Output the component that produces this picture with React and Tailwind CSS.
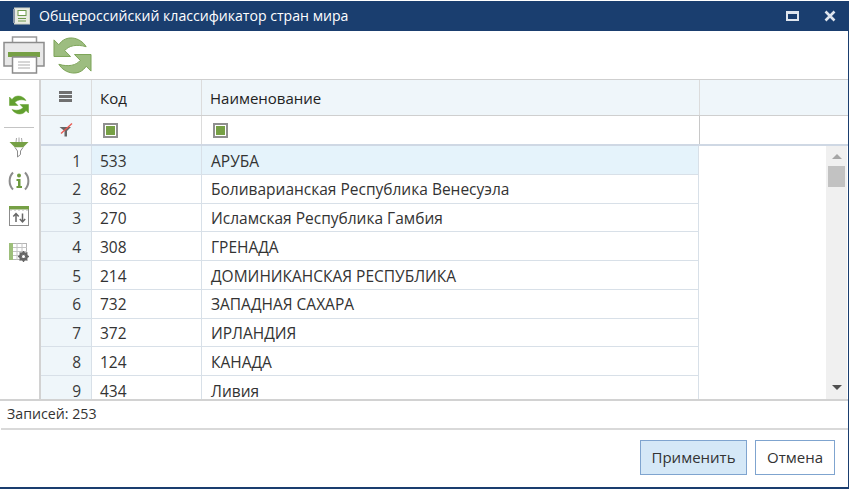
// Country classifier dialog
import React from 'react';

const ROWS = [
  [1, '533', 'АРУБА'],
  [2, '862', 'Боливарианская Республика Венесуэла'],
  [3, '270', 'Исламская Республика Гамбия'],
  [4, '308', 'ГРЕНАДА'],
  [5, '214', 'ДОМИНИКАНСКАЯ РЕСПУБЛИКА'],
  [6, '732', 'ЗАПАДНАЯ САХАРА'],
  [7, '372', 'ИРЛАНДИЯ'],
  [8, '124', 'КАНАДА'],
  [9, '434', 'Ливия'],
];

function RefreshIcon({ size, fill = '#9dbd80', stroke = '#7aa255' }) {
  return (
    <svg width={size} height={size} viewBox="0 0 40 40">
      <path
        d="M1 4 L1 21 L18 21 L12 15 C16 10 24 8 34 11 C28 1 13 -2 6 9 Z"
        fill={fill}
        stroke={stroke}
        strokeWidth="1"
      />
      <path
        d="M39 36 L39 19 L22 19 L28 25 C24 30 16 32 6 29 C12 39 27 42 34 31 Z"
        fill={fill}
        stroke={stroke}
        strokeWidth="1"
      />
    </svg>
  );
}

function PrintIcon() {
  return (
    <svg width="42" height="38" viewBox="0 0 42 38">
      <path d="M9.5 1 H33.5 V9 H9.5 Z" fill="#fff" stroke="#9a9a9a" strokeWidth="1.5" />
      <path d="M1 6.5 H41 V30 H1 Z" fill="#e8e8e8" stroke="#8c8c8c" strokeWidth="1.5" />
      <rect x="5" y="16" width="32" height="5" fill="#76a045" />
      <path d="M9.5 21 H33.5 V37 H9.5 Z" fill="#fff" stroke="#8c8c8c" strokeWidth="1.5" />
      <path d="M15 26 H27 M15 29 H27 M15 32 H27" stroke="#c9c9c9" strokeWidth="1.3" />
    </svg>
  );
}

function FilterOffIcon() {
  return (
    <svg width="14" height="14" viewBox="0 0 14 14">
      <path d="M0.5 4 H12 L8 8 V13.5 H5.5 V8 Z" fill="#666" />
      <path d="M2 10.5 L13 0.5" stroke="#e8584f" strokeWidth="1.3" />
    </svg>
  );
}

function FunnelIcon() {
  return (
    <svg width="20" height="21" viewBox="0 0 20 21">
      <path d="M7 5 L7.5 1 M10 5 V0.5 M13 5 L12.5 1" stroke="#a8a8a8" strokeWidth="1" />
      <path d="M0.5 5 H19.5 L14 10.5 H6 Z" fill="#76a045" />
      <path d="M6 10.5 L8.5 14 V20 L11.5 17.5 V14 L14 10.5" fill="#fff" stroke="#8c8c8c" strokeWidth="1" />
    </svg>
  );
}

function InfoIcon() {
  return (
    <svg width="22" height="20" viewBox="0 0 22 20">
      <path d="M5 1.5 C0.5 6 0.5 14 5 18.5" fill="none" stroke="#8c8c8c" strokeWidth="2" />
      <path d="M17 1.5 C21.5 6 21.5 14 17 18.5" fill="none" stroke="#8c8c8c" strokeWidth="2" />
      <circle cx="11" cy="4.5" r="2" fill="#6d9a3f" />
      <path d="M8.5 8 H12.5 V15 H14 V17 H8.5 V15 H10 V10 H8.5 Z" fill="#6d9a3f" />
    </svg>
  );
}

function SortIcon() {
  return (
    <svg width="20" height="20" viewBox="0 0 20 20">
      <rect x="0.5" y="0.5" width="19" height="19" fill="#fff" stroke="#8c8c8c" />
      <rect x="0" y="0" width="20" height="3.5" fill="#76a045" />
      <path d="M2 3.5 V5 M6 3.5 V5 M10 3.5 V5 M14 3.5 V5 M18 3.5 V5" stroke="#b5b5b5" />
      <path d="M7 16 V8 M4.3 10.5 L7 7.5 L9.7 10.5" fill="none" stroke="#666" strokeWidth="1.5" />
      <path d="M13.5 7.5 V15.5 M10.8 13 L13.5 16 L16.2 13" fill="none" stroke="#666" strokeWidth="1.5" />
    </svg>
  );
}

function GridGearIcon() {
  return (
    <svg width="21" height="20" viewBox="0 0 21 20">
      <rect x="0.5" y="0.5" width="17" height="16" fill="#fff" stroke="#b5b5b5" />
      <rect x="0" y="0" width="4" height="17" fill="#9dbf7a" />
      <path d="M4 4.5 H18 M4 8.5 H18 M4 12.5 H18 M8 0 V17 M13 0 V17" stroke="#c4c4c4" />
      <circle cx="14.5" cy="13.5" r="3.4" fill="none" stroke="#666" strokeWidth="2.2" />
      <path d="M14.5 8 V19 M9 13.5 H20 M10.6 9.6 L18.4 17.4 M18.4 9.6 L10.6 17.4" stroke="#666" strokeWidth="1.4" />
      <circle cx="14.5" cy="13.5" r="1.5" fill="#fff" />
    </svg>
  );
}

function FilterBox() {
  return (
    <div className="w-[15px] h-[15px] border-2 border-[#8f8f8f] flex items-center justify-center bg-white">
      <div className="w-[9px] h-[9px] bg-[#76a045]" />
    </div>
  );
}

function Row({ n, code, name, active }) {
  return (
    <div className="flex h-[28.75px] shrink-0 text-[15.5px]">
      <div className="w-[51px] shrink-0 bg-[#eff6fa] border-r border-b border-[#d8e0e8] flex items-center justify-end pt-[3px] pr-[10px] text-[#3a3a3a]">
        {n}
      </div>
      <div className={`w-[110px] shrink-0 border-r border-b border-[#d8e0e8] flex items-center pt-[3px] pl-[8px] text-[#333] ${active ? 'bg-[#e5f3fb]' : ''}`}>
        {code}
      </div>
      <div className={`w-[497px] shrink-0 border-r border-b border-[#d8e0e8] flex items-center pt-[3px] pl-[9px] text-[#333] ${active ? 'bg-[#e5f3fb]' : ''}`}>
        {name}
      </div>
    </div>
  );
}

export default function App() {
  return (
    <div
      className="w-[850px] h-[490px] bg-white pt-px pb-px flex flex-col overflow-hidden text-[15px] leading-none"
      style={{ fontFamily: '"Open Sans", "Noto Sans", sans-serif' }}
    >
      <div className="flex-1 min-h-0 flex flex-col border-r border-b-2 border-[#1a3e6f] mr-px">
        {/* Title bar */}
        <div className="h-[30px] shrink-0 bg-[#1a3e6f] flex items-center pl-[13px] pr-[12px] text-white">
          <svg width="17" height="18" viewBox="0 0 17 18" className="mr-[9px]">
            <rect x="1.5" y="1" width="15" height="16" fill="#e8ebe2" stroke="#cfd3c8" />
            <rect x="0" y="2" width="2" height="14" fill="#8a97a8" />
            <rect x="5" y="3.5" width="8" height="5" fill="#fff" stroke="#6f9a4e" />
            <path d="M5 11.5 H13 M5 14 H13" stroke="#6f9a4e" strokeWidth="1.2" />
          </svg>
          <span className="text-[14.1px]">Общероссийский классификатор стран мира</span>
          <div className="flex-1" />
          <div className="w-[13px] h-[10px] border-2 border-t-[3px] border-[#dfe5ee] mr-[25px]" />
          <svg width="12" height="12" viewBox="0 0 12 12">
            <path d="M1.5 1.5 L10.5 10.5 M10.5 1.5 L1.5 10.5" stroke="#dfe5ee" strokeWidth="2.6" />
          </svg>
        </div>

        {/* Toolbar */}
        <div className="h-[49px] shrink-0 flex items-center pl-[3px] gap-[8px] border-b border-[#cfcfcf]">
          <PrintIcon />
          <RefreshIcon size={39} />
        </div>

        <div className="flex-1 min-h-0 flex">
          {/* Side tools */}
          <div className="w-[41px] shrink-0 border-r-2 border-[#d2d2d2] flex flex-col items-center pt-[15px] pr-px">
            <RefreshIcon size={20} fill="#62a02f" stroke="#62a02f" />
            <div className="w-[30px] h-px bg-[#c4c4c4] mt-[12px] mb-[9px]" />
            <FunnelIcon />
            <div className="mt-[13px]"><InfoIcon /></div>
            <div className="mt-[15px]"><SortIcon /></div>
            <div className="mt-[17px] ml-px"><GridGearIcon /></div>
          </div>

          {/* Grid */}
          <div className="flex-1 min-w-0 flex flex-col">
            {/* Header */}
            <div className="h-[36px] shrink-0 flex bg-[#eff6fa] border-b border-[#cfcfcf] text-[#222] text-[15px]">
              <div className="w-[51px] shrink-0 border-r border-[#dcdcdc] flex justify-center items-start pt-[11px] pr-px">
                <div className="w-[13px] h-[11px] flex flex-col justify-between">
                  <div className="h-[3px] bg-[#707070]" />
                  <div className="h-[3px] bg-[#707070]" />
                  <div className="h-[3px] bg-[#707070]" />
                </div>
              </div>
              <div className="w-[110px] shrink-0 border-r border-[#dcdcdc] flex items-center pt-[2px] pl-[8px]">Код</div>
              <div className="w-[498px] shrink-0 border-r border-[#dcdcdc] flex items-center pt-[2px] pl-[8px]">Наименование</div>
              <div className="flex-1" />
            </div>

            {/* Filter row */}
            <div className="h-[30px] shrink-0 flex border-b-2 border-[#cfd8e4]">
              <div className="w-[51px] shrink-0 bg-[#eff6fa] border-r border-[#dcdcdc] flex justify-center items-center pr-px">
                <FilterOffIcon />
              </div>
              <div className="w-[110px] shrink-0 border-r border-[#dcdcdc] flex items-center pl-[11px]">
                <FilterBox />
              </div>
              <div className="w-[498px] shrink-0 border-r border-[#c8c8c8] flex items-center pl-[11px]">
                <FilterBox />
              </div>
              <div className="flex-1" />
            </div>

            {/* Rows */}
            <div className="flex-1 min-h-0 flex">
              <div className="flex-1 min-w-0 flex flex-col overflow-hidden">
                {ROWS.map(([n, code, name]) => (
                  <Row key={n} n={n} code={code} name={name} active={n === 1} />
                ))}
              </div>
              <div className="w-[21px] shrink-0 bg-[#f0f0f0] flex flex-col items-center mr-px">
                <div className="h-[20px] flex items-center justify-center w-full">
                  <div className="w-0 h-0 border-x-[5px] border-x-transparent border-b-[5px] border-b-[#a6a6a6]" />
                </div>
                <div className="w-[17px] h-[21px] bg-[#c2c2c2]" />
                <div className="flex-1" />
                <div className="h-[24px] flex items-center justify-center w-full">
                  <div className="w-0 h-0 border-x-[5px] border-x-transparent border-t-[5px] border-t-[#505050]" />
                </div>
              </div>
            </div>
          </div>
        </div>

        {/* Status */}
        <div className="h-[29px] shrink-0 border-t-2 border-[#d2d2d2] flex items-center pl-[7px] text-[14.2px] text-[#333]">
          Записей: 253
        </div>

        {/* Footer */}
        <div className="h-[59px] shrink-0 border-t-2 border-[#d9d9d9] ml-px flex justify-end items-start pt-[10px] pr-[13px] gap-[8px] text-[#333]">
          <button className="w-[107px] h-[35px] bg-[#d5e8f7] border border-[#7fa4cf]">Применить</button>
          <button className="w-[80px] h-[35px] bg-white border border-[#7fa4cf]">Отмена</button>
        </div>
      </div>
    </div>
  );
}
